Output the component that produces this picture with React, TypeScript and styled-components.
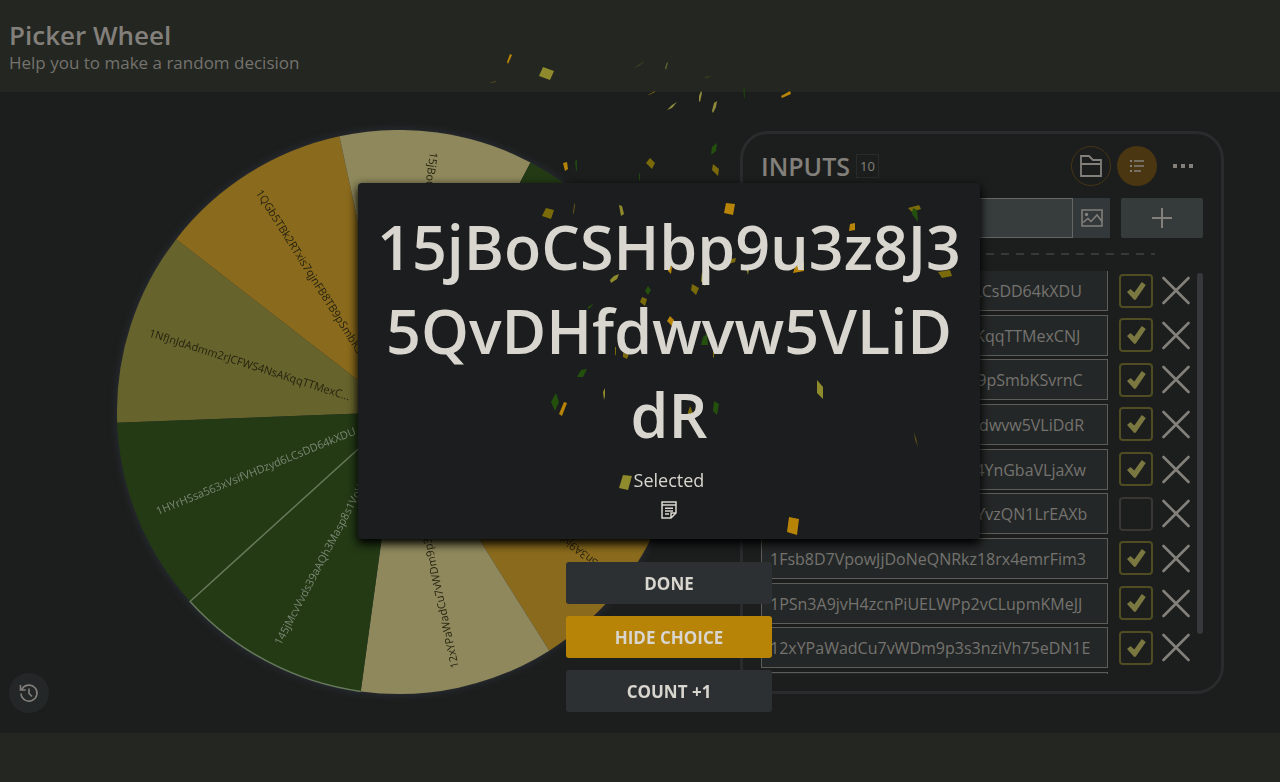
import React, { useState } from "react";
import styled, { createGlobalStyle } from "styled-components";

const GlobalStyle = createGlobalStyle`
  * { box-sizing: border-box; }
  body {
    margin: 0;
    background: #242621;
    color: #83807b;
    font-family: "Open Sans", "Noto Sans", sans-serif;
  }
  button, input { font-family: inherit; color: inherit; margin: 0; }
  button { padding: 0; border: 0; background: none; cursor: pointer; }
`;

const Page = styled.div`
  display: flex;
  flex-direction: column;
  min-height: 100vh;
`;

const Header = styled.header`
  height: 92px;
  padding: 17px 9px 0;
`;

const Title = styled.h1`
  margin: 0;
  font-size: 26px;
  line-height: 36px;
  font-weight: 600;
`;

const Tagline = styled.p`
  margin: 0;
  font-size: 17px;
  line-height: 20px;
  color: #74736e;
`;

const Main = styled.main`
  position: relative;
  display: grid;
  grid-template-columns: 1fr 484px;
  padding: 38px 56px 39px 58px;
  background: #1c1e1d;
`;

const WheelArea = styled.section`
  display: flex;
  justify-content: center;
`;

const WheelSvg = styled.svg`
  width: 564px;
  height: 564px;
  overflow: visible;
  filter: drop-shadow(0 0 4px #2b2f3a);
`;

const SliceText = styled.text`
  font-size: 11px;
  font-weight: 500;
  dominant-baseline: central;
`;

const HistoryButton = styled.button`
  position: absolute;
  left: 9px;
  bottom: 20px;
  display: grid;
  place-items: center;
  width: 40px;
  height: 40px;
  border-radius: 50%;
  background: #242728;
`;

const Panel = styled.section`
  height: 563px;
  margin-top: 1px;
  padding: 12px 18px 0;
  border: 3px solid #292b2d;
  border-radius: 28px;
`;

const PanelHead = styled.div`
  display: flex;
  align-items: center;
  gap: 6px;
`;

const PanelTitle = styled.h2`
  margin: 0;
  font-size: 25px;
  line-height: 40px;
  font-weight: 600;
`;

const Count = styled.span`
  margin-right: auto;
  padding: 0 3px;
  border: 1px solid #292b2b;
  font-size: 13px;
  line-height: 22px;
`;

const RoundButton = styled.button<{ $kind?: "outline" | "filled" }>`
  display: grid;
  place-items: center;
  width: 40px;
  height: 40px;
  border-radius: 50%;
  border: 1px solid ${(p) => (p.$kind === "outline" ? "#453513" : "transparent")};
  background: ${(p) => (p.$kind === "filled" ? "#4a3711" : "none")};
`;

const AddRow = styled.form`
  display: flex;
  height: 40px;
  margin-top: 12px;
`;

const AddInput = styled.input`
  flex: 1;
  min-width: 0;
  padding: 0 8px;
  border: 1px solid #666764;
  border-radius: 0;
  background: #373c3d;
  font-size: 16px;
  outline: none;
`;

const ImageButton = styled.button`
  display: grid;
  place-items: center;
  width: 37px;
  background: #33383a;
`;

const AddButton = styled.button`
  display: grid;
  place-items: center;
  width: 82px;
  margin-left: 11px;
  border-radius: 2px;
  background: #353a3b;
`;

const Dashes = styled.div`
  width: 394px;
  height: 2px;
  margin: 15px 0 16px;
  background: repeating-linear-gradient(90deg, #36383a 0 8px, transparent 8px 15px);
`;

const ListFrame = styled.div`
  display: flex;
  justify-content: space-between;
  height: 403px;
  overflow: hidden;
`;

const List = styled.ul`
  display: flex;
  flex-direction: column;
  justify-content: space-between;
  width: 430px;
  height: 443px;
  margin: -1px 0 0;
  padding: 0;
  list-style: none;
`;

const Row = styled.li`
  display: flex;
  align-items: center;
  height: 41px;
`;

const ChoiceInput = styled.input`
  flex: 1;
  min-width: 0;
  height: 41px;
  padding: 1px 7px 0 8px;
  border: 1px solid #5c5c59;
  border-radius: 0;
  background: #242727;
  font-size: 16px;
  color: #74736f;
  outline: none;
`;

const CheckLabel = styled.label`
  position: relative;
  width: 34px;
  height: 34px;
  margin: 0 9px 0 11px;
`;

const CheckInput = styled.input`
  appearance: none;
  display: block;
  width: 34px;
  height: 34px;
  border: 2px solid #393633;
  border-radius: 4px;
  &:checked { border-color: #504d22; }
`;

const CheckMark = styled.svg`
  position: absolute;
  inset: 0;
  pointer-events: none;
`;

const RemoveButton = styled.button`
  display: grid;
  width: 29px;
  height: 29px;
`;

const ScrollThumb = styled.div`
  width: 6px;
  height: 361px;
  margin: 2px 0 0;
  border-radius: 3px;
  background: #36393b;
`;

const Overlay = styled.div`
  position: fixed;
  inset: 0;
  z-index: 10;
  display: flex;
  flex-direction: column;
  align-items: center;
  padding: 183px 0 0 58px;
`;

const Dialog = styled.div`
  width: 622px;
  padding: 22px 16px 21px;
  border-radius: 4px;
  background: #1b1d1e;
  box-shadow: 0 4px 10px 1px #000000;
  text-align: center;
`;

const DialogBody = styled.div`
  position: relative;
  z-index: 3;
  color: #d9d6cf;
`;

const Result = styled.p`
  margin: 0 0 10px;
  font-size: 61px;
  line-height: 84px;
  font-weight: 600;
  word-break: break-all;
`;

const Selected = styled.p`
  margin: 0;
  font-size: 18px;
  line-height: 26px;
`;

const NoteButton = styled.button`
  display: block;
  width: 16px;
  height: 17px;
  margin: 8px auto 0;
`;

const Actions = styled.div`
  display: flex;
  flex-direction: column;
  gap: 12px;
  width: 206px;
  margin-top: 23px;
`;

const ActionButton = styled.button<{ $primary?: boolean }>`
  height: 42px;
  border-radius: 3px;
  background: ${(p) => (p.$primary ? "#b88408" : "#2d3033")};
  color: #d9d6cf;
  font-size: 17px;
  font-weight: 700;
`;

const ConfettiLayer = styled.svg`
  position: absolute;
  inset: 0;
  z-index: 2;
  width: 100%;
  height: 100%;
  pointer-events: none;
`;

const OLIVE = "#66632c";
const GOLD = "#8a6a1c";
const CREAM = "#8e885c";
const GREEN = "#233a15";

const R = 282;
const STEP = 40;
const START = 177.8;

const slices = [
  { text: "1NfJnJdAdmm2rJCFWS4NsAKqqTTMexC...", fill: OLIVE },
  { text: "1QGb5TBk2RTxis7qjnFB8TB9pSmbKSvrnC", fill: GOLD },
  { text: "15jBoCSHbp9u3z8J35QvDHfdwvw5VLiDdR", fill: CREAM },
  { text: "", fill: GREEN },
  { text: "", fill: OLIVE },
  { text: "1PSn3A9jvH4zcnPiUELWPp2vCLupmKMeJJ", fill: GOLD },
  { text: "12xYPaWadCu7vWDm9p3s3nziVh75eDN1E", fill: CREAM },
  { text: "145jMcvVvds39aAQh3Masp8s1VoV", fill: GREEN },
  { text: "1HYrHSsa563xVsifVHDzyd6LCsDD64kXDU", fill: GREEN },
];

const point = (deg: number) => {
  const a = (deg * Math.PI) / 180;
  return `${(R * Math.cos(a)).toFixed(2)} ${(R * Math.sin(a)).toFixed(2)}`;
};

const Wheel = () => (
  <WheelSvg viewBox="-282 -282 564 564">
    {slices.map((s, i) => {
      const from = START + i * STEP;
      const light = s.fill === GREEN;
      return (
        <g key={i}>
          <path d={`M0 0L${point(from)}A${R} ${R} 0 0 1 ${point(from + STEP)}Z`} fill={s.fill} />
          {s.text && (
            <SliceText
              x={-262}
              y={0}
              fill={light ? "#7a8874" : "#262310"}
              transform={`rotate(${from + STEP / 2 + 180})`}
            >
              {s.text}
            </SliceText>
          )}
        </g>
      );
    })}
    <path
      d={`M0 0L${point(137.8)}A${R} ${R} 0 0 0 ${point(97.8)}`}
      fill="none"
      stroke="#66795a"
      strokeWidth="1.5"
    />
  </WheelSvg>
);

const initialChoices = [
  { value: "1HYrHSsa563xVsifVHDzyd6LCsDD64kXDU", on: true },
  { value: "1NfJnJdAdmm2rJCFWS4NsAKqqTTMexCNJ", on: true },
  { value: "1QGb5TBk2RTxis7qjnFB8TB9pSmbKSvrnC", on: true },
  { value: "15jBoCSHbp9u3z8J35QvDHfdwvw5VLiDdR", on: true },
  { value: "1LdRcdxfbSnmCYYNdes1kp4YnGbaVLjaXw", on: true },
  { value: "1BvBMSEYstWetqTFn5Au4nYvzQN1LrEAXb", on: false },
  { value: "1Fsb8D7VpowJjDoNeQNRkz18rx4emrFim3", on: true },
  { value: "1PSn3A9jvH4zcnPiUELWPp2vCLupmKMeJJ", on: true },
  { value: "12xYPaWadCu7vWDm9p3s3nziVh75eDN1E", on: true },
  { value: "145jMcvVvds39aAQh3Masp8s1VoV", on: true },
];

const confetti: [string, string][] = [
  ["507,62 510,54 512,55 508,64", "#b88408"],
  ["543,67 554,71 550,80 539,76", "#8f8b2c"],
  ["490,83 496,81 495,82 491,83", "#7d6a14"],
  ["634,68 640,64 645,61 639,66", "#45471f"],
  ["665,68 667,62 668,63 666,70", "#5d6130"],
  ["648,95 655,91 655,92 649,95", "#8a6c14"],
  ["705,77 712,76 709,77 705,78", "#4c4a1a"],
  ["667,110 672,105 677,102 672,108", "#8f8b3c"],
  ["699,101 699,96 701,91 702,93 700,102", "#8f8b3c"],
  ["712,111 714,103 717,101 716,107 713,113", "#8f8b3c"],
  ["743,89 745,88 745,97 744,99", "#1f3c10"],
  ["781,96 790,91 791,94 782,98", "#b88408"],
  ["563,163 567,162 568,169 565,171", "#b88408"],
  ["575,161 577,160 577,170 576,171", "#214810"],
  ["650,158 655,163 652,169 646,163", "#7b6a0a"],
  ["639,174 640,173 640,179 639,181", "#1f4710"],
  ["712,147 717,143 716,151 711,155", "#24500e"],
  ["713,164 719,169 718,176 712,170", "#7b6a0a"],
  ["546,208 554,210 551,219 542,216", "#7b6a0a"],
  ["574,205 575,203 574,212 573,215", "#7d6a14"],
  ["619,205 622,206 624,214 621,216", "#8f8b2c"],
  ["726,203 735,204 733,215 724,213", "#b88408"],
  ["850,224 855,223 855,230 849,231", "#b88408"],
  ["908,208 919,205 921,209 912,212", "#7b6a0a"],
  ["913,208 917,210 918,222 912,214", "#24500e"],
  ["668,263 672,267 671,274 668,271", "#b88408"],
  ["614,276 619,274 617,279 611,283 610,280", "#8f8b2c"],
  ["645,291 648,286 651,290 648,295", "#24500e"],
  ["642,297 647,299 645,306 640,302", "#7b6a0a"],
  ["692,284 699,288 696,295 691,290", "#7b6a0a"],
  ["702,272 706,281 705,286 701,281", "#8f8b2c"],
  ["726,260 736,258 735,262 723,266", "#7b6a0a"],
  ["746,268 749,269 748,275", "#8f8b2c"],
  ["796,264 804,262 804,271 793,273", "#b88408"],
  ["938,272 950,270 952,276 942,278", "#7b6a0a"],
  ["588,307 594,303 590,308 588,309", "#24500e"],
  ["670,316 674,320 672,326 667,321", "#b88408"],
  ["703,337 707,334 708,345 701,345", "#24500e"],
  ["615,347 616,347 616,356 615,354", "#7b6a0a"],
  ["713,346 714,347 714,358 713,357", "#7b6a0a"],
  ["623,353 629,354 627,359 623,357", "#7b6a0a"],
  ["581,370 587,369 583,377 577,377", "#24500e"],
  ["817,380 823,387 823,399 817,393", "#8f8b2c"],
  ["914,432 916,438 918,447 915,440", "#57501b"],
  ["556,393 559,402 555,411 551,402", "#24500e"],
  ["564,402 567,403 562,416 559,414", "#b88408"],
  ["603,392 605,388 605,396 604,400", "#8f8b2c"],
  ["690,406 693,413 689,422 688,412", "#7b6a0a"],
  ["714,401 719,404 717,415 713,411", "#24500e"],
  ["623,475 632,476 628,490 619,488", "#8f8b2c"],
  ["789,517 799,519 797,535 787,532", "#b88408"],
];

export default function App() {
  const [choices, setChoices] = useState(initialChoices);
  const toggle = (i: number) =>
    setChoices((c) => c.map((x, k) => (k === i ? { ...x, on: !x.on } : x)));

  return (
    <>
      <GlobalStyle />
      <Page>
        <Header>
          <Title>Picker Wheel</Title>
          <Tagline>Help you to make a random decision</Tagline>
        </Header>
        <Main>
          <WheelArea>
            <Wheel />
          </WheelArea>
          <Panel>
            <PanelHead>
              <PanelTitle>INPUTS</PanelTitle>
              <Count>10</Count>
              <RoundButton $kind="outline" aria-label="Open list">
                <svg width="24" height="24" viewBox="0 0 24 24" fill="none" stroke="currentColor" strokeWidth="1.8">
                  <path d="M2 22V2h8l4 4h8v16zM2 10h20" />
                </svg>
              </RoundButton>
              <RoundButton $kind="filled" aria-label="List view">
                <svg width="16" height="14" viewBox="0 0 16 14" fill="none" stroke="currentColor" strokeWidth="1.5">
                  <path d="M5 2h10M5 7h10M5 12h7" />
                  <path d="M1 2h2M1 7h2M1 12h2" strokeWidth="2.2" />
                </svg>
              </RoundButton>
              <RoundButton aria-label="More">
                <svg width="22" height="4" viewBox="0 0 22 4" fill="currentColor">
                  <path d="M1 0h4v4h-4zM9 0h4v4h-4zM17 0h4v4h-4z" />
                </svg>
              </RoundButton>
            </PanelHead>
            <AddRow onSubmit={(e) => e.preventDefault()}>
              <AddInput aria-label="New choice" />
              <ImageButton type="button" aria-label="Add image">
                <svg width="22" height="18" viewBox="0 0 22 18" fill="none" stroke="currentColor" strokeWidth="1.5">
                  <path d="M1 1h20v16H1zM2 13.5l5-4 3 3 6-6.500 5 6.500" />
                  <circle cx="5.500" cy="5.500" r="1.700" fill="currentColor" stroke="none" />
                </svg>
              </ImageButton>
              <AddButton type="submit" aria-label="Add choice">
                <svg width="20" height="20" viewBox="0 0 20 20" fill="none" stroke="currentColor" strokeWidth="2">
                  <path d="M10 0v20M0 10h20" />
                </svg>
              </AddButton>
            </AddRow>
            <Dashes />
            <ListFrame>
              <List>
                {choices.map((c, i) => (
                  <Row key={i}>
                    <ChoiceInput aria-label={`Choice ${i + 1}`} defaultValue={c.value} />
                    <CheckLabel>
                      <CheckInput
                        type="checkbox"
                        aria-label={`Include choice ${i + 1}`}
                        checked={c.on}
                        onChange={() => toggle(i)}
                      />
                      {c.on && (
                        <CheckMark width="34" height="34" viewBox="0 0 34 34" fill="#7a7740">
                          <path d="M8 18l3.500-3 3.800 3.500 7.500-10.500 4 3-9.800 14.300q-1.200 1.200-2.400 0z" />
                        </CheckMark>
                      )}
                    </CheckLabel>
                    <RemoveButton aria-label={`Remove choice ${i + 1}`}>
                      <svg width="29" height="29" viewBox="0 0 29 29" fill="none" stroke="currentColor" strokeWidth="2.600" strokeLinecap="round">
                        <path d="M1.500 2l25 25M26.500 2l-25 25" />
                      </svg>
                    </RemoveButton>
                  </Row>
                ))}
              </List>
              <ScrollThumb />
            </ListFrame>
          </Panel>
          <HistoryButton aria-label="History">
            <svg width="20" height="20" viewBox="0 0 20 20" fill="none" stroke="currentColor" strokeWidth="1.600">
              <path d="M3 6.200A8 8 0 1 1 2 10.500M1.500 2v5h5.200M10 5.500v5l3 3" />
            </svg>
          </HistoryButton>
        </Main>
      </Page>
      <Overlay>
        <Dialog role="dialog" aria-label="Selected choice">
          <DialogBody>
            <Result>15jBoCSHbp9u3z8J35QvDHfdwvw5VLiDdR</Result>
            <Selected>Selected</Selected>
            <NoteButton aria-label="Notes">
              <svg width="16" height="18" viewBox="0 0 16 18" fill="none" stroke="currentColor" strokeWidth="1.500">
                <path d="M1 1h14v11l-5 5H1zM1 4h14M15 12h-5v5M4 7.200h8M4 10h8M4 13h4" />
              </svg>
            </NoteButton>
          </DialogBody>
        </Dialog>
        <Actions>
          <ActionButton>DONE</ActionButton>
          <ActionButton $primary>HIDE CHOICE</ActionButton>
          <ActionButton>COUNT +1</ActionButton>
        </Actions>
        <ConfettiLayer aria-hidden="true">
          {confetti.map(([points, fill], i) => (
            <polygon key={i} points={points} fill={fill} />
          ))}
        </ConfettiLayer>
      </Overlay>
    </>
  );
}
